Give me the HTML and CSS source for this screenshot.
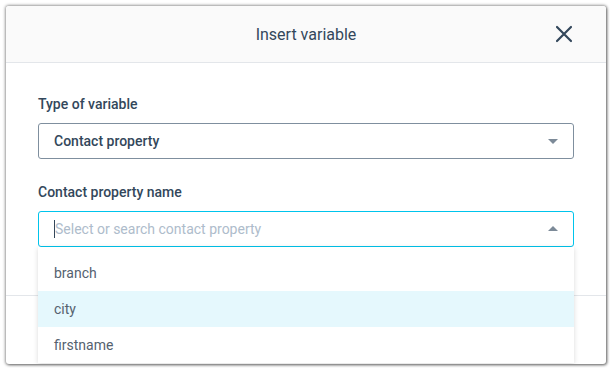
FILE: index.html
```html
<!DOCTYPE html>
<html lang="en">

<head>
    <meta charset="UTF-8">
    <title>Insert variable</title>
    <link rel="stylesheet" href="styles.css">
</head>

<body>
    <div class="modal">
        <div class="modal-header">
            <h3 class="modal-title">Insert variable</h3>
            <button class="close-btn" aria-label="Close">
                <svg width="18" height="18" viewBox="0 0 18 18">
                    <path d="M2 2 L16 16 M16 2 L2 16" stroke="#33475b" stroke-width="2.2" stroke-linecap="round" fill="none" />
                </svg>
            </button>
        </div>
        <div class="modal-body">
            <div class="field">
                <label class="field-label">Type of variable</label>
                <div class="select">
                    <span class="select-value">Contact property</span>
                    <span class="caret caret-down"></span>
                </div>
            </div>
            <div class="field">
                <label class="field-label">Contact property name</label>
                <div class="select select-open">
                    <span class="cursor"></span>
                    <span class="placeholder">Select or search contact property</span>
                    <span class="caret caret-up"></span>
                    <ul class="dropdown">
                        <li>branch</li>
                        <li class="hover">city</li>
                        <li>firstname</li>
                    </ul>
                </div>
            </div>
        </div>
        <div class="modal-footer"></div>
    </div>
</body>

</html>
```

FILE: styles.css
```css
* {
    margin: 0;
    padding: 0;
    box-sizing: border-box;
    list-style: none;
}

body {
    background-color: #fff;
    font-family: Roboto, "Liberation Sans", sans-serif;
    color: #33475b;
    overflow: hidden;
}

.modal {
    margin: 6px;
    width: 600px;
    height: 358px;
    background-color: #fff;
    border-radius: 3px;
    box-shadow: 0 0 3px 1px rgba(0, 0, 0, 0.35), 1px 1px 3px rgba(0, 0, 0, 0.4);
    display: flex;
    flex-direction: column;
    overflow: hidden;
}

.modal-header {
    height: 57px;
    flex-shrink: 0;
    background-color: #fafafa;
    border-bottom: 1px solid #e3e6ea;
    display: flex;
    align-items: center;
    justify-content: center;
    position: relative;
}

.modal-title {
    font-size: 16px;
    font-weight: 400;
    color: #33475b;
    margin-top: 1px;
}

.close-btn {
    position: absolute;
    right: 33px;
    top: 19px;
    border: none;
    background: none;
    width: 18px;
    height: 18px;
}

.modal-body {
    padding: 31px 32px 0 32px;
    height: 233px;
    flex-shrink: 0;
    border-bottom: 1px solid #e3e6ea;
}

.field {
    margin-bottom: 23px;
}

.field-label {
    display: block;
    font-size: 14px;
    font-weight: 500;
    line-height: 20px;
    margin-bottom: 9px;
}

.select {
    position: relative;
    height: 36px;
    border: 1px solid #7f8f9e;
    border-radius: 3px;
    padding: 0 15px;
    display: flex;
    align-items: center;
    font-size: 14px;
}

.select-value {
    font-weight: 500;
}

.select-open {
    border-color: #00c4ec;
}

.cursor {
    width: 1px;
    height: 18px;
    background-color: #33475b;
}

.placeholder {
    color: #aebccb;
}

.caret {
    position: absolute;
    right: 15px;
    top: 15px;
    width: 0;
    height: 0;
    border-left: 5px solid transparent;
    border-right: 5px solid transparent;
}

.caret-down {
    border-top: 5px solid #7c8a98;
}

.caret-up {
    top: 14px;
    border-bottom: 5px solid #7c8a98;
}

.dropdown {
    position: absolute;
    left: -1px;
    right: -1px;
    top: 35px;
    padding-top: 8px;
    background-color: #fff;
    box-shadow: 0 1px 5px rgba(0, 0, 0, 0.15);
    font-size: 14px;
    color: #55626f;
}

.dropdown li {
    height: 36px;
    line-height: 36px;
    padding-left: 16px;
}

.dropdown .hover {
    background-color: #e5f8fd;
}
```
